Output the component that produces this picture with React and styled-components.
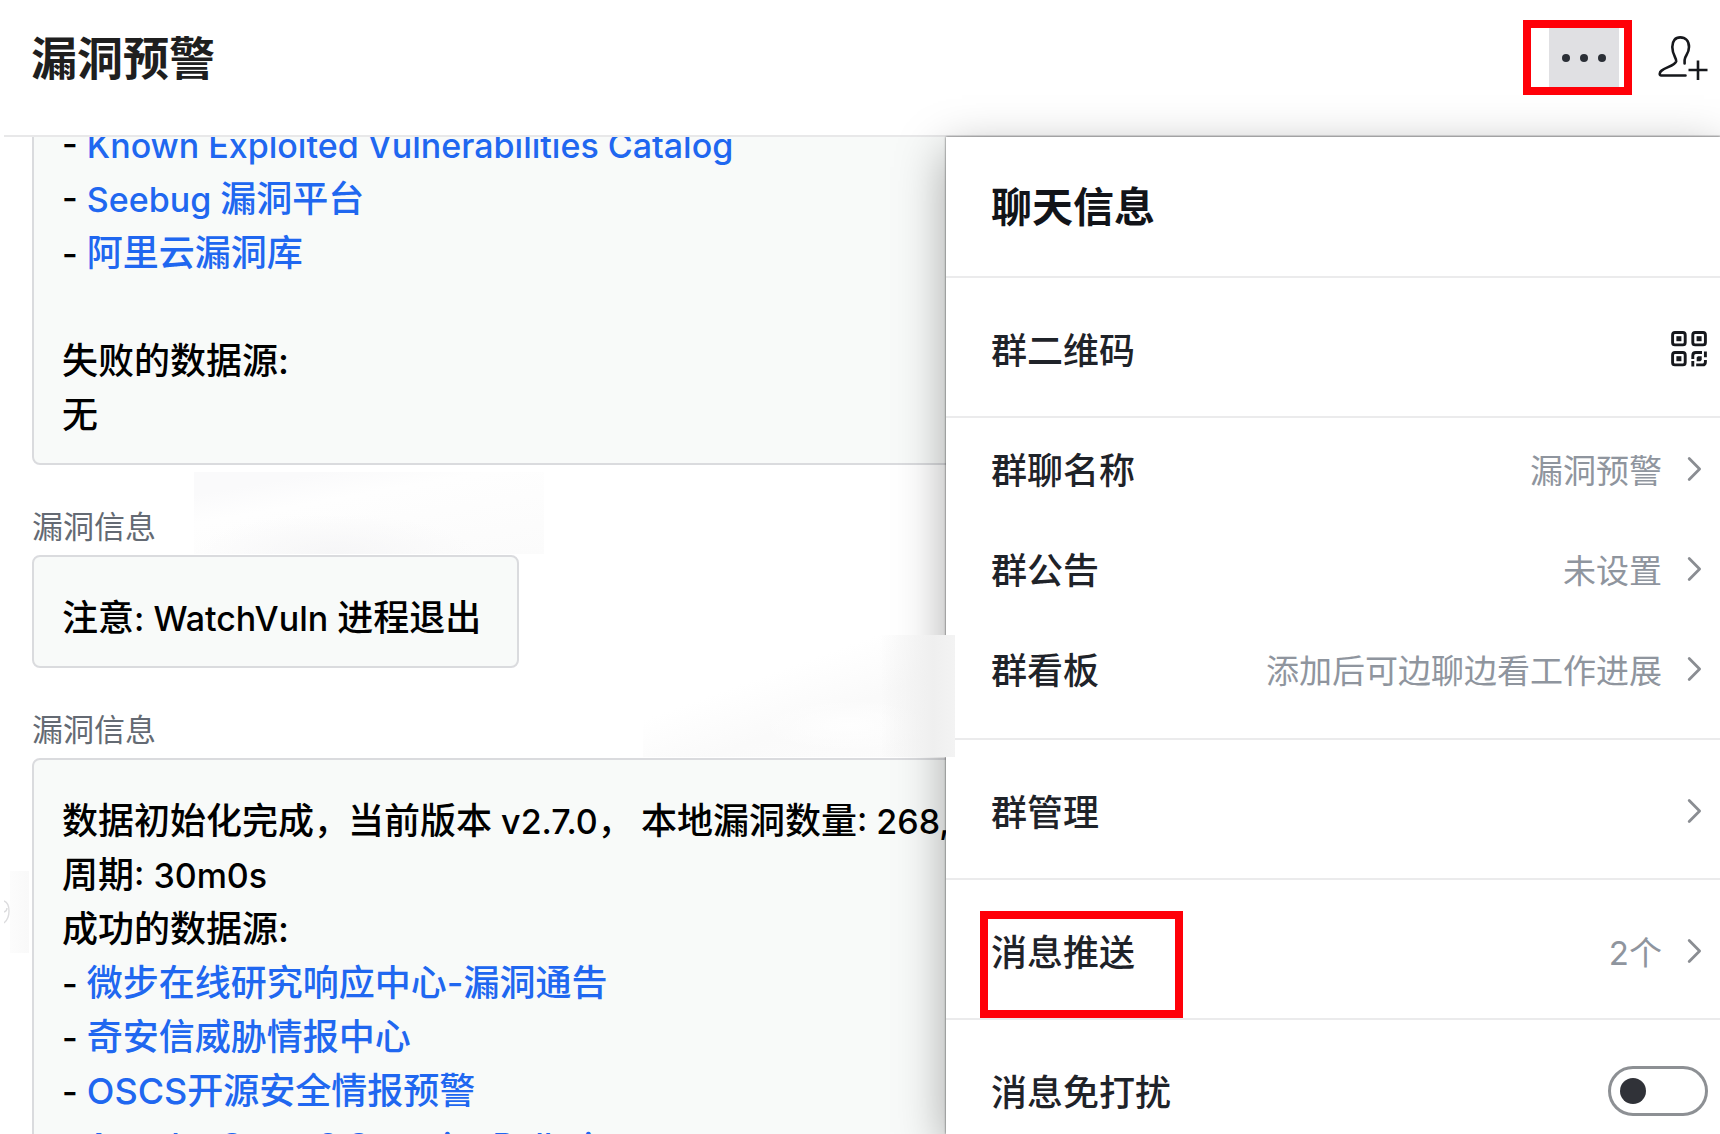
import React from 'react'
import styled, { createGlobalStyle } from 'styled-components'

const GlobalStyle = createGlobalStyle`
  * {
    box-sizing: border-box;
  }
  body {
    margin: 0;
    background: #fff;
    font-family: Inter, 'Noto Sans CJK SC', sans-serif;
  }
  button {
    border: 0;
    padding: 0;
    background: none;
    font: inherit;
    color: inherit;
    cursor: pointer;
  }
  svg {
    display: block;
    flex: none;
  }
`

const Page = styled.div`
  display: flex;
  flex-direction: column;
  height: 100vh;
  overflow: hidden;
`

const Header = styled.header`
  display: flex;
  align-items: center;
  margin-left: 4px;
  padding: 20px 12px 40px 27px;
  border-bottom: 2px solid #e8e8e9;
`

const Title = styled.h1`
  flex: 1;
  margin: 0;
  font-size: 46px;
  line-height: 60px;
  font-weight: 700;
  color: #1f1f1f;
`

const MarkedAction = styled.div`
  margin-right: 26px;
  padding: 0 5px 0 18px;
  border: 8px solid #ff0008;
`

const MoreButton = styled.button`
  display: flex;
  align-items: center;
  justify-content: center;
  width: 70px;
  height: 59px;
  background: #e0e0e3;
`

const Body = styled.div`
  position: relative;
  flex: 1;
  min-height: 0;
`

const Chat = styled.main`
  height: 100%;
  padding-left: 32px;
  overflow: hidden;
`

const Messages = styled.div`
  display: flex;
  flex-direction: column;
  align-items: flex-start;
  margin-top: -55px;
`

const Message = styled.section`
  position: relative;
  width: ${props => (props.$wide ? '100%' : 'auto')};
`

const Sender = styled.div`
  padding: 42px 0 8px;
  font-size: 31px;
  line-height: 40px;
  color: #646a73;
`

const Bubble = styled.div`
  position: relative;
  padding: 34px 36px 21px 28px;
  border: 2px solid #dadbde;
  border-radius: 8px;
  background: #f8faf9;
  font-size: 36px;
  line-height: 54px;
  font-weight: 500;
  color: #000;
  white-space: pre;
`

const Line = styled.div`
  height: 54px;
`

const Latin = styled.span`
  font-size: 34px;
`

const SourceLink = styled.a`
  color: #2067f0;
  text-decoration: none;
`

const Drawer = styled.aside`
  position: absolute;
  top: 0;
  right: 0;
  width: 45%;
  height: 100%;
  background: #fff;
  box-shadow: 0 14px 46px rgba(0, 0, 0, 0.34), 0 0 2px rgba(0, 0, 0, 0.7);
`

const DrawerTitle = styled.h2`
  margin: 0;
  padding: 40px 45px 39px;
  border-bottom: 2px solid #ebebec;
  font-size: 41px;
  line-height: 60px;
  font-weight: 700;
  color: #121419;
`

const Group = styled.div`
  padding: ${props => (props.$list ? '1px 0 19px' : '4px 0 0')};
  border-bottom: 2px solid #ebebec;
`

const Row = styled.div`
  position: relative;
  display: flex;
  align-items: center;
  width: 100%;
  height: ${props => (props.$compact ? '100px' : '134px')};
  padding: 0 12px 0 45px;
  color: #1f2329;
`

const RowLabel = styled.span`
  flex: 1;
  padding-top: 4px;
  text-align: left;
  font-size: 36px;
  line-height: 54px;
  font-weight: 500;
`

const RowValue = styled.span`
  margin-right: 24px;
  padding-top: 4px;
  font-size: 33px;
  line-height: 54px;
  color: #8f959e;
`

const Outline = styled.span`
  position: absolute;
  top: 27px;
  bottom: 0;
  left: 34px;
  width: 203px;
  border: 8px solid #ff0008;
`

const Switch = styled.input`
  appearance: none;
  display: flex;
  align-items: center;
  width: 100px;
  height: 50px;
  margin: 0;
  padding-left: 9px;
  border: 3px solid #8d9094;
  border-radius: 25px;
  background: #fff;

  &::before {
    content: '';
    width: 26px;
    height: 26px;
    border-radius: 50%;
    background: #303238;
  }
  &:checked {
    padding-left: 59px;
  }
`

const SenderSmudge = styled.div`
  position: absolute;
  top: 7px;
  left: 162px;
  width: 350px;
  height: 82px;
  background: radial-gradient(ellipse 140px 40px at 40% 100%, #f6f6f7, transparent),
    linear-gradient(170deg, #fafafb 16%, #fefefe 36%, #fbfbfb);
`

const SideSmudge = styled.div`
  position: absolute;
  top: 203px;
  left: -28px;
  width: 25px;
  height: 82px;
  padding-top: 28px;
  background: linear-gradient(90deg, transparent 6px, #fcfcfc 6px, #f9f9f9);
`

const EdgeSmudge = styled.div`
  position: absolute;
  top: 498px;
  right: calc(45% - 9px);
  width: 312px;
  height: 122px;
  background: linear-gradient(90deg, transparent 76%, #efefef 93%, #f3f3f3),
    radial-gradient(ellipse 90px 26px at 66% 74%, #fefefe, transparent),
    linear-gradient(160deg, #fff 36%, #fafafa 62%, #fcfcfc);
`

const MoreIcon = () => (
  <svg width="46" height="10" viewBox="0 0 46 10" fill="#2b2f36">
    <circle cx="5" cy="5" r="4" />
    <circle cx="23" cy="5" r="4" />
    <circle cx="41" cy="5" r="4" />
  </svg>
)

const AddMemberIcon = () => (
  <svg width="50" height="46" viewBox="0 0 50 46" fill="none" stroke="#16181c" strokeWidth="2.6">
    <path
      d="M27.5 40.5H3.2C1.2 40.5 1.2 37.4 3.6 35.6C8 32.2 17 30.4 18.2 26.3C18.8 23.4 14.3 20 14.3 12C14.3 5.6 17.4 2.4 22.2 2.4C27.4 2.4 31 6 31 12C31 19.2 26.6 20.6 26.6 25V28.4"
      strokeLinecap="round"
      strokeLinejoin="round"
    />
    <path d="M30.5 35H49.5M40 25.5V45" />
  </svg>
)

const QrIcon = () => (
  <svg width="37" height="36" viewBox="0 0 37 36" fill="none" stroke="#16181c" strokeWidth="2.9">
    <rect x="1.6" y="1.5" width="12.6" height="12.4" rx="2.4" />
    <rect x="21.8" y="1.5" width="12.6" height="12.4" rx="2.4" />
    <rect x="1.6" y="21.5" width="12.6" height="12.4" rx="2.4" />
    <path d="M21.8 28V24.5Q21.8 21.5 24.8 21.5H31M34.4 20.4V26.2M34.4 29V30.9Q34.4 33.9 31.4 33.9H25.2M21.8 30V35.4" />
    <g fill="#16181c" stroke="none">
      <rect x="5.4" y="5.2" width="5" height="5" />
      <rect x="25.6" y="5.2" width="5" height="5" />
      <rect x="5.4" y="25.2" width="5" height="5" />
      <path d="M27 25.2H30.7V29L29.4 30.3H25.7V26.6Z" />
    </g>
  </svg>
)

const ArrowIcon = () => (
  <svg width="22" height="26" viewBox="0 0 22 26" fill="none" stroke="#8a8d92" strokeWidth="2.8">
    <path d="M3.2 2.6L13.6 13L3.2 23.4" strokeLinecap="round" strokeLinejoin="round" />
  </svg>
)

const ArcMark = () => (
  <svg width="6" height="26" viewBox="0 0 6 26" fill="none" stroke="#dcdcde" strokeWidth="1.4">
    <path d="M0 2Q5 4 5 12Q5 20 0 24M0 13Q3 12 3 9" />
  </svg>
)

const Source = ({ children }) => (
  <Line>
    <Latin>- </Latin>
    <SourceLink href="#source">{children}</SourceLink>
  </Line>
)

const LinkRow = ({ label, value, compact, marked }) => (
  <Row as="button" type="button" $compact={compact}>
    <RowLabel>{label}</RowLabel>
    {value && <RowValue>{value}</RowValue>}
    <ArrowIcon />
    {marked && <Outline />}
  </Row>
)

export default function App() {
  return (
    <Page>
      <GlobalStyle />
      <Header>
        <Title>漏洞预警</Title>
        <MarkedAction>
          <MoreButton type="button" aria-label="更多">
            <MoreIcon />
          </MoreButton>
        </MarkedAction>
        <button type="button" aria-label="添加成员">
          <AddMemberIcon />
        </button>
      </Header>

      <Body>
        <Chat>
          <Messages>
            <Message $wide>
              <Bubble>
                <Source><Latin>Known Exploited Vulnerabilities Catalog</Latin></Source>
                <Source><Latin>Seebug </Latin>漏洞平台</Source>
                <Source>阿里云漏洞库</Source>
                <Line />
                <Line>失败的数据源:</Line>
                <Line>无</Line>
              </Bubble>
            </Message>

            <Message>
              <SenderSmudge />
              <Sender>漏洞信息</Sender>
              <Bubble>
                <Line>注意<Latin>: WatchVuln </Latin>进程退出</Line>
              </Bubble>
            </Message>

            <Message $wide>
              <Sender>漏洞信息</Sender>
              <Bubble>
                <Line>
                  数据初始化完成<Latin>，</Latin>当前版本<Latin> v2.7.0， </Latin>本地漏洞数量<Latin>: 268,</Latin>
                </Line>
                <Line>周期<Latin>: 30m0s</Latin></Line>
                <Line>成功的数据源:</Line>
                <Source>微步在线研究响应中心-漏洞通告</Source>
                <Source>奇安信威胁情报中心</Source>
                <Source>OSCS开源安全情报预警</Source>
                <Source><Latin>Apache Struts2 Security Bulletins</Latin></Source>
              </Bubble>
              <SideSmudge>
                <ArcMark />
              </SideSmudge>
            </Message>
          </Messages>
        </Chat>

        <Drawer>
          <DrawerTitle>聊天信息</DrawerTitle>
          <Group>
            <Row as="button" type="button">
              <RowLabel>群二维码</RowLabel>
              <QrIcon />
            </Row>
          </Group>
          <Group $list>
            <LinkRow compact label="群聊名称" value="漏洞预警" />
            <LinkRow compact label="群公告" value="未设置" />
            <LinkRow compact label="群看板" value="添加后可边聊边看工作进展" />
          </Group>
          <Group>
            <LinkRow label="群管理" />
          </Group>
          <Group>
            <LinkRow label="消息推送" value="2个" marked />
          </Group>
          <Group>
            <Row as="label">
              <RowLabel>消息免打扰</RowLabel>
              <Switch type="checkbox" />
            </Row>
          </Group>
        </Drawer>
        <EdgeSmudge />
      </Body>
    </Page>
  )
}
